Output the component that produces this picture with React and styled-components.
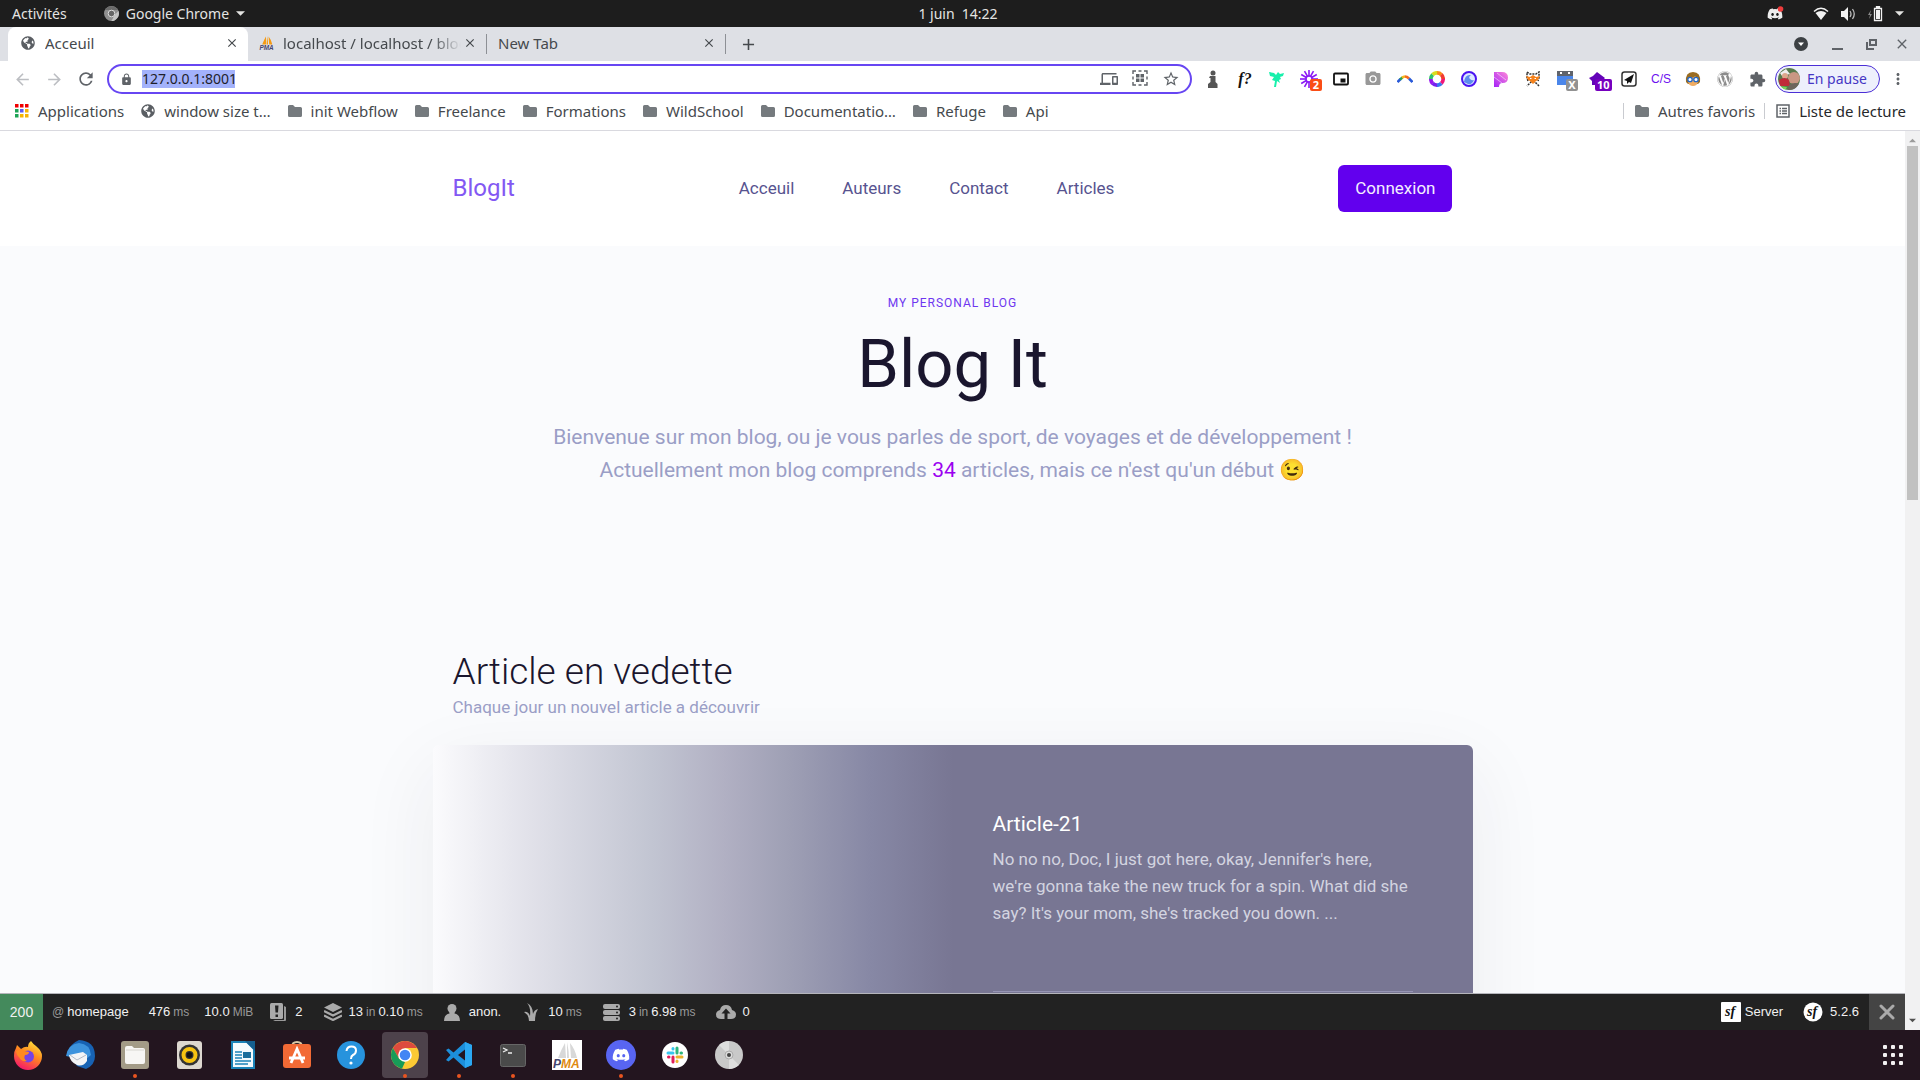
import React from "react";
import styled, { createGlobalStyle, css } from "styled-components";
import { FaDiscord, FaWordpress, FaGlobeAmericas } from "react-icons/fa";
import { MdLock, MdStarBorder, MdRefresh, MdArrowBack, MdArrowForward, MdExtension, MdMoreVert, MdDevices, MdClose, MdAdd, MdPhotoCamera } from "react-icons/md";

const GlobalStyle = createGlobalStyle`
  *, *::before, *::after { box-sizing: border-box; }
  body { margin: 0; background: #fff; }
  h1, h2, h3, p { margin: 0; padding: 0; }
  button, input { font: inherit; color: inherit; border: 0; padding: 0; background: none; }
  button { cursor: pointer; }
  a { color: inherit; text-decoration: none; }
  svg { display: block; flex: none; }
`;

const uiFont = `"Noto Sans", "Open Sans", sans-serif`;
const pageFont = `Roboto, "Liberation Sans", "Noto Color Emoji", sans-serif`;

/* ---------- desktop shell ---------- */

const Desktop = styled.div`
  display: flex;
  flex-direction: column;
  height: 100vh;
  overflow: hidden;
  font: 15px/20px ${uiFont};
`;

const SystemBar = styled.header`
  display: grid;
  grid-template-columns: 1fr auto 1fr;
  align-items: center;
  height: 27px;
  flex: none;
  padding: 0 16px 0 12px;
  background: #1d1d1d;
  color: #e4e4e2;
  font-size: 14px;
`;

const SystemGroup = styled.div`
  display: flex;
  align-items: center;
  gap: ${(p) => p.$gap}px;
  justify-content: ${(p) => (p.$end ? "flex-end" : "flex-start")};
`;

const MenuButton = styled.button`
  display: flex;
  align-items: center;
  gap: 7px;
`;

const Clock = styled.time`
  white-space: pre;
`;

const DiscordTray = styled.span`
  display: flex;
  margin-right: 17px;
`;

/* ---------- browser tabs ---------- */

const TabStrip = styled.div`
  display: flex;
  align-items: stretch;
  height: 34px;
  flex: none;
  padding: 0 10px 0 8px;
  background: #dee0e5;
  color: #45494d;
`;

const Tab = styled.div`
  display: flex;
  align-items: center;
  gap: ${(p) => (p.$active ? 10 : 8)}px;
  width: ${(p) => (p.$active ? 240 : 238)}px;
  padding: 0 9px 2px ${(p) => (p.$active ? 13 : 11)}px;
  border-radius: 8px 8px 0 0;
  background: ${(p) => (p.$active ? "#fff" : "transparent")};
`;

const TabTitle = styled.span`
  flex: 1;
  overflow: hidden;
  white-space: nowrap;
  ${(p) =>
    p.$fade &&
    css`
      margin-right: -6px;
      mask-image: linear-gradient(90deg, #000 84%, transparent);
    `}
`;

const TabDivider = styled.span`
  width: 1px;
  height: 20px;
  align-self: center;
  background: #8d9095;
`;

const IconButton = styled.button`
  display: flex;
  align-items: center;
  justify-content: center;
  width: ${(p) => p.$size || 14}px;
  height: ${(p) => p.$size || 14}px;
  flex: none;
  color: ${(p) => p.$color || "inherit"};
`;

const NewTab = styled(IconButton)`
  align-self: center;
  margin-left: 12px;
`;

const WindowControls = styled.div`
  display: flex;
  align-items: center;
  gap: 16px;
  margin-left: auto;
  color: #5f6368;
`;

/* ---------- address bar ---------- */

const Toolbar = styled.div`
  display: flex;
  align-items: center;
  height: 36px;
  flex: none;
  padding: 0 14px 0 12px;
  background: #fff;
`;

const NavButtons = styled.div`
  display: flex;
  gap: 12px;
  margin-right: 11px;
  color: #5f6368;
`;

const AddressBar = styled.label`
  display: flex;
  align-items: center;
  flex: 1;
  height: 30px;
  padding: 0 10px 0 11px;
  border: 2px solid #6746f2;
  border-radius: 15px;
  color: #5f6368;
`;

const AddressInput = styled.input`
  width: 93px;
  height: 18px;
  margin: 0 auto 0 9px;
  background: #a3b2fb;
  color: #1f1f2b;
  font-size: 14px;
  line-height: 18px;
  outline: none;
`;

const AddressIcons = styled.span`
  display: flex;
  gap: 14px;
`;

const Extensions = styled.div`
  display: flex;
  gap: 14px;
  margin: 0 9px 0 12px;
`;

const ExtensionButton = styled(IconButton)`
  position: relative;
  font: ${(p) => p.$font || `12px/18px ${uiFont}`};
`;

const Badge = styled.span`
  position: absolute;
  top: 9px;
  left: ${(p) => (p.$wide ? 7 : 10)}px;
  min-width: 12px;
  padding: 0 2px;
  border-radius: 2px;
  background: ${(p) => p.$bg};
  color: #fff;
  font: 700 11px/12px ${uiFont};
`;

const Profile = styled.button`
  display: flex;
  align-items: center;
  gap: 6px;
  width: 105px;
  height: 28px;
  padding: 0 3px 0 1px;
  margin-right: 10px;
  border: 1px solid #4b2fd6;
  border-radius: 14px;
  background: #eef0fc;
  color: #4536c4;
  font-size: 14px;
  white-space: nowrap;
`;

/* ---------- bookmarks ---------- */

const BookmarkBar = styled.nav`
  display: flex;
  align-items: center;
  height: 34px;
  flex: none;
  padding: 0 14px 6px 15px;
  border-bottom: 1px solid #d9d9df;
  background: #fff;
  color: #45494d;
`;

const Bookmark = styled.a`
  display: flex;
  align-items: center;
  gap: 9px;
  padding-right: 17px;
  white-space: nowrap;
  color: ${(p) => (p.$dark ? "#26282b" : "inherit")};
  &:last-child { padding-right: 0; }
`;

const BookmarkGroup = styled.div`
  display: flex;
  margin-left: ${(p) => (p.$end ? "auto" : 0)};
`;

const Divider = styled.span`
  width: 1px;
  height: 16px;
  align-self: center;
  margin-right: 11px;
  margin-left: ${(p) => (p.$tight ? -8 : 0)}px;
  background: #c9cbd0;
`;

/* ---------- page ---------- */

const Viewport = styled.div`
  display: flex;
  flex: 1;
  min-height: 0;
`;

const PageColumn = styled.div`
  display: flex;
  flex-direction: column;
  flex: 1;
  min-width: 0;
`;

const Page = styled.div`
  flex: 1;
  min-height: 0;
  overflow: hidden;
  background: #fafbfd;
  font-family: ${pageFont};
`;

const SiteHeader = styled.header`
  padding: 34px 24px;
  background: #fff;
`;

const Container = styled.div`
  width: 100%;
  max-width: 1000px;
  margin: 0 auto;
`;

const HeaderRow = styled(Container)`
  display: flex;
  align-items: center;
  justify-content: space-between;
`;

const Brand = styled.a`
  padding-bottom: 2px;
  color: #8358f3;
  font-size: 24px;
  line-height: 30px;
`;

const SiteNav = styled.nav`
  display: flex;
  gap: 48px;
  color: #57538f;
  font-size: 17px;
  line-height: 27px;
`;

const LoginButton = styled.button`
  height: 47px;
  padding: 0 17px 2px;
  border-radius: 6px;
  background: #6200ee;
  color: #f4efff;
  font-size: 17px;
`;

const Hero = styled.section`
  display: flex;
  flex-direction: column;
  align-items: center;
  padding: 47px 24px 0;
  text-align: center;
`;

const Eyebrow = styled.p`
  color: #6e37f0;
  font-size: 12px;
  line-height: 20px;
  letter-spacing: 1px;
  text-transform: uppercase;
`;

const Title = styled.h1`
  margin: 11px 0 17px;
  color: #1a162e;
  font-size: 67px;
  font-weight: 400;
  line-height: 80px;
`;

const Lead = styled.p`
  color: #9a9ec6;
  font-size: 21px;
  line-height: 33px;
`;

const Count = styled.strong`
  color: #9b00f0;
  font-weight: 400;
`;

const Featured = styled.section`
  padding: 163px 24px 0;
`;

const SectionTitle = styled.h2`
  color: #1a162e;
  font-size: 37px;
  font-weight: 300;
  line-height: 44px;
`;

const SectionText = styled.p`
  margin: 0 0 24px;
  color: #9a9ec6;
  font-size: 17px;
  line-height: 27px;
`;

const Card = styled.article`
  display: grid;
  grid-template-columns: 1fr 1fr;
  min-height: 420px;
  margin: 0 -20px;
  border-radius: 6px;
  background: linear-gradient(90deg, #fbfbfd 0%, #e2e2ea 9%, #c2c5d2 21%, #b1b0c3 28%, #9fa0b5 34%, #8788a5 42%, #787693 50%);
  box-shadow: 0 24px 80px rgba(40, 44, 60, 0.07);
`;

const CardBody = styled.div`
  grid-column: 2;
  padding: 65px 60px 0 40px;
`;

const CardTitle = styled.h3`
  color: #fff;
  font-size: 21px;
  font-weight: 400;
  line-height: 28px;
`;

const CardText = styled.p`
  margin: 8px 0 64px;
  color: #d3d4e0;
  font-size: 17px;
  line-height: 27px;
`;

const Rule = styled.hr`
  margin: 0;
  border: 0;
  border-top: 1px solid #9694b4;
`;

const Scrollbar = styled.div`
  display: flex;
  flex-direction: column;
  align-items: center;
  justify-content: space-between;
  width: 15px;
  padding: 7px 0;
  background: #f1f1f2;
`;

const Thumb = styled.div`
  width: 11px;
  height: 40%;
  margin: 3px 0 auto;
  background: #c1c1c1;
`;

/* ---------- debug toolbar ---------- */

const DebugBar = styled.footer`
  display: flex;
  height: 37px;
  flex: none;
  border-top: 1px solid #b5b5bb;
  background: #222;
  color: #f1f1f1;
  font: 13px/36px "Liberation Sans", Arial, sans-serif;
`;

const Status = styled.a`
  width: 43px;
  background: #448a5c;
  font-size: 14px;
  text-align: center;
`;

const DebugItem = styled.a`
  display: flex;
  align-items: center;
  gap: 3px;
  margin-left: ${(p) => p.$space}px;
  white-space: nowrap;
  svg { margin-right: ${(p) => p.$icon || 4}px; }
`;

const Dim = styled.span`
  color: #999;
  font-size: 12px;
`;

const DebugRight = styled.div`
  display: flex;
  margin-left: auto;
`;

const DebugClose = styled.button`
  display: flex;
  align-items: center;
  justify-content: center;
  width: 36px;
  margin-left: 10px;
  background: #444;
`;

/* ---------- dock ---------- */

const Dock = styled.nav`
  display: flex;
  align-items: center;
  height: 50px;
  flex: none;
  gap: 8px;
  padding: 0 17px 0 4px;
  background: #23151f;
`;

const DockApp = styled.button`
  position: relative;
  display: flex;
  align-items: center;
  justify-content: center;
  width: 46px;
  height: 46px;
  border-radius: 4px;
  background: ${(p) => (p.$active ? "#4d424b" : "transparent")};
  ${(p) =>
    p.$running &&
    css`
      &::after {
        content: "";
        position: absolute;
        bottom: 0;
        width: 4px;
        height: 4px;
        border-radius: 2px;
        background: #e95420;
      }
    `}
`;

const Launcher = styled.button`
  display: grid;
  grid-template-columns: repeat(3, 4px);
  gap: 4px;
  margin-left: auto;
`;

const LauncherDot = styled.span`
  height: 4px;
  border-radius: 1px;
  background: #f2f0f1;
`;

/* ---------- drawings ---------- */

const Svg = ({ w = 16, h = w, vb, children, ...rest }) => (
  <svg width={w} height={h} viewBox={vb || `0 0 ${w} ${h}`} aria-hidden="true" {...rest}>{children}</svg>
);
const Caret = ({ up, w = 9, color = "#e4e4e2" }) => (
  <Svg w={w} h={5} vb="0 0 10 5"><path d={up ? "M0 5h10L5 0z" : "M0 0h10L5 5z"} fill={color} /></Svg>
);
const Folder = () => (
  <Svg w={14} h={12}><path d="M0 1.500Q0 0 1.500 0H5l2 2h5.500Q14 2 14 3.500V10.500Q14 12 12.500 12h-11Q0 12 0 10.500z" fill="#757a7e" /></Svg>
);
const ChromeGrey = () => (
  <Svg w={15}><circle cx="7.500" cy="7.500" r="7.500" fill="#8f8f8f" /><path d="M1 4A7.500 7.500 0 0 1 14 4H7.500z" fill="#6b6b6b" /><path d="M14.500 5A7.500 7.500 0 0 1 7.500 15L10.500 9z" fill="#c4c4c4" /><circle cx="7.500" cy="7.500" r="3.300" fill="#666" stroke="#ddd" /></Svg>
);
const AppsGrid = () => {
  const c = ["#f00000", "#f00000", "#f00000", "#1ca455", "#5b5bf0", "#f6b400", "#1ca455", "#f6b400", "#f6b400"];
  return <Svg w={14}>{c.map((f, i) => <rect key={i} x={(i % 3) * 5} y={Math.floor(i / 3) * 5} width="3.500" height="3.500" fill={f} />)}</Svg>;
};
const PmaIcon = ({ size = 16, box }) => (
  <Svg w={size} vb="0 0 30 30">
    {box && <path d="M0 0h30v30H0z" fill="#fff" />}
    <path d="M13 3Q9 10 6 18h8zM15 2q2 9 2 16h-2zM18 3q5 6 7 15h-6z" fill={box ? "#d8d8d8" : "#f59a13"} />
    <text x="1" y="28" fontFamily="Liberation Sans, sans-serif" fontStyle="italic" fontWeight="700" fontSize="12" fill="#45456f">P<tspan fill={box ? "#e08a10" : "#45456f"}>MA</tspan></text>
  </Svg>
);
const QrIcon = () => (
  <Svg w={16} fill="none" stroke="#5f6368" strokeWidth="1.400"><path d="M1 4V1h3M12 1h3v3M15 12v3h-3M4 15H1v-3M6.500 1h3M6.500 15h3M1 6.500v3M15 6.500v3" /><path d="M4 4h3.500v3.500H4zM8.500 4H12v3.500H8.500zM4 8.500h3.500V12H4zM8.500 8.500H12V12H8.500z" fill="#5f6368" stroke="none" /></Svg>
);
const ReadingList = () => (
  <Svg w={14} fill="none" stroke="#5f6368" strokeWidth="1.500"><path d="M1 1h12v12H1z" /><path d="M3.500 4.500h1.500M6 4.500h5M3.500 7h1.500M6 7h5M3.500 9.500h1.500M6 9.500h5" /></Svg>
);
const Restore = () => (
  <Svg w={11} fill="none" stroke="#5f6368" strokeWidth="2"><path d="M4 1h6v5H4z" /><path d="M1 3v7h7" /></Svg>
);
const TabMenu = () => (
  <Svg w={14}><circle cx="7" cy="7" r="7" fill="#3c4043" /><path d="M4 5.500h6L7 9z" fill="#fff" /></Svg>
);
const Wifi = () => <Svg w={16} h={13}><path d="M0 4Q8-3 16 4L8 13z" fill="#1d1d1d" /><path d="M2.500 6Q8 2 13.500 6L8 13z" fill="#f2f2f2" /><path d="M1 4.500Q8-2 15 4.500" stroke="#f2f2f2" fill="none" strokeWidth="1.500" /></Svg>;
const Speaker = () => <Svg w={15} h={14}><path d="M0 4h3l4-4v14L3 10H0z" fill="#f2f2f2" /><path d="M9 4q2 3 0 6M11.500 2q3.500 5 0 10" fill="none" stroke="#bbb" strokeWidth="1.300" /></Svg>;
const Battery = () => <Svg w={15} h={16}><path d="M3 4 0 9h2l-1 4 3-5H2z" fill="#8b8b8b" /><path d="M6.500 2.500h7v12h-7zM8.500 0.500h3v1.500h-3z" fill="none" stroke="#f2f2f2" strokeWidth="1.300" /><path d="M8 4h4v9H8z" fill="#f2f2f2" /></Svg>;

const Avatar = () => (
  <Svg w={24}><defs><clipPath id="avatar"><circle cx="12" cy="12" r="11" /></clipPath></defs><g clipPath="url(#avatar)"><path d="M0 0h24v24H0z" fill="#587a4c" /><circle cx="17" cy="11" r="6" fill="#c99783" /><path d="M3 6l6-4 4 5-8 2z" fill="#eee" /><circle cx="8" cy="9" r="3" fill="#dda68c" /><path d="M2 13q6-4 10 0l1 6H3z" fill="#c02a39" /><path d="M12 18q6-4 12 0v7H11z" fill="#6d655c" /><path d="M2 19l8 1-2 4z" fill="#78d455" /></g></Svg>
);

const range = (n) => Array.from({ length: n }, (_, i) => i);

const extensions = [
  { label: "Info", art: <Svg w={14} h={18}><circle cx="7" cy="3" r="2.500" fill="#555" /><path d="M4 6h5.500v6l2 2v4H2v-4l2.500-2V8H3z" fill="#555" /></Svg> },
  { label: "WhatFont", font: `italic 700 16px/18px "Liberation Serif", serif`, text: "f?", color: "#111" },
  { label: "Deer", art: <Svg w={16} h={16}><path d="M0 1l5 1 2 2 2-3 2 2 4-1-1 3-3 1 1 2-2 1 1 3-3-2-1 6H5l1-6-3-1 2-3-4-1z" fill="#17f0ac" /></Svg> },
  { label: "Loom", badge: "2", bg: "#fa4d16", art: <Svg w={18}>{range(12).map((i) => <path key={i} d="M9 0v6" stroke="#8a18f5" strokeWidth="1.600" transform={`rotate(${i * 30} 9 9)`} />)}<circle cx="9" cy="9" r="3" fill="none" stroke="#8a18f5" strokeWidth="1.500" /></Svg> },
  { label: "Picture in picture", art: <Svg w={16} h={14}><rect x="1" y="1.500" width="14" height="11" rx="1" fill="#fff" stroke="#111" strokeWidth="1.800" /><path d="M7.500 6.500h5v4h-5z" fill="#111" /></Svg> },
  { label: "Screenshot", art: <MdPhotoCamera size={18} color="#989898" /> },
  { label: "Rainbow", art: <Svg w={16} h={12} fill="none" strokeWidth="2.600"><path d="M0.500 9l3-3" stroke="#2959d8" /><path d="M3 6.500l2.500-2" stroke="#25a05a" /><path d="M5 4.800Q6.500 3.600 8 3.500" stroke="#f5b51a" /><path d="M8 3.500q2 0 4 2" stroke="#f36a1f" /><path d="M12 5.500l3.500 3.500" stroke="#2959d8" /></Svg> },
  { label: "Colour wheel", art: <Svg w={16}>{["#f88a18", "#f33b2f", "#f0167a", "#3a76f0", "#7721ee", "#9916f0", "#31c26a", "#d8dd1d"].map((c, i) => <path key={c} d="M8 8V0A8 8 0 0 1 13.800 2.400z" fill={c} transform={`rotate(${i * 45} 8 8)`} />)}<circle cx="8" cy="8" r="4.300" fill="#fff" /></Svg> },
  { label: "Wave", art: <Svg w={16}><circle cx="8" cy="8" r="7" fill="#dce8ff" stroke="#4a14f2" strokeWidth="2" /><path d="M3 11Q4 3 10 4q-3 2-1 4t4 1q-2 5-6 4z" fill="#5c8bee" /></Svg> },
  { label: "Pesticide", art: <Svg w={14} h={15}><defs><linearGradient id="pink" x1="0" y1="1" x2="1" y2="0"><stop stopColor="#a522f8" /><stop offset="1" stopColor="#ff8ad8" /></linearGradient></defs><path d="M0 0h8q6 0 6 5.500T8.500 11Q5 11 5 15H0z" fill="url(#pink)" /><path d="M0 5l8 6M3 1l9 7" stroke="#fff" strokeWidth=".5" /></Svg> },
  { label: "Fox", art: <Svg w={16}><path d="M2 1l3 2h6l3-2v6l-1 3M14 15l-4-4H6l-4 4M3 10L2 7V1" fill="none" stroke="#333" strokeWidth="1.500" strokeDasharray="2 1" /><path d="M1 5l4 1 3-2 3 2 4-1-2 4-2 1-3 3-3-3-2-1z" fill="#f5811a" /><path d="M5 7h1.500v1H5zM9.500 7H11v1H9.500z" fill="#fff" /></Svg> },
  { label: "Blocks", badge: "X", bg: "#929292", art: <Svg w={16} h={16}><path d="M0 0h16v5H0z" fill="#60646c" /><path d="M0 5h16v9H0z" fill="#4a86ea" /><path d="M3 1h2v2H3zM11 1h2v2h-2z" fill="#fff" /></Svg> },
  { label: "Purple", badge: "10", bg: "#7600be", art: <Svg w={16} h={15}><path d="M8 0l4 3 4 3-3 3v4H3V9L0 6l4-2z" fill="#6304b8" /></Svg> },
  { label: "Send", art: <Svg w={16}><rect x="1" y="1" width="14" height="14" rx="2.500" fill="#fff" stroke="#333" strokeWidth="1.500" /><path d="M13 3 3 9l3 1v3l2-2 2 1z" fill="#111" /></Svg> },
  { label: "CJS", font: `12px/18px "Liberation Sans Narrow", "Liberation Sans", sans-serif`, text: "C/S", color: "#6c10ef" },
  { label: "Face", art: <Svg w={16}><path d="M1 11Q0 1 8 1t7 10l-2 2H3z" fill="#9a6c22" /><path d="M3 7q6 0 7-2 1 2 3 2v4q-1 4-5 4t-5-4z" fill="#f0ac62" /><circle cx="5" cy="8.500" r="2.200" fill="#fff" stroke="#1f67c9" strokeWidth="1.300" /><circle cx="11" cy="8.500" r="2.200" fill="#fff" stroke="#1f67c9" strokeWidth="1.300" /></Svg> },
  { label: "WordPress", art: <FaWordpress size={16} color="#8c8c8c" /> },
  { label: "Extensions", art: <MdExtension size={17} color="#5f6368" /> },
];

const bookmarks = ["init Webflow", "Freelance", "Formations", "WildSchool", "Documentatio…", "Refuge", "Api"];
const siteLinks = ["Acceuil", "Auteurs", "Contact", "Articles"];

/* debug toolbar glyphs */
const Logs = () => <Svg w={16} h={18}><path d="M14 3l2 1v13q0 1-1 1H5l-2-1h11z" fill="#999" /><rect width="13" height="16" rx="1.500" fill="#aaa" /><path d="M5 2.500h3.500L8 9.500H5.500zM5.500 11.500h2.500v2.500H5.500z" fill="#222" /></Svg>;
const Layers = () => <Svg w={18} h={18}><path d="M9 0l9 4.500L9 9 0 4.500z" fill="#aaa" /><path d="M0 8l9 4.500L18 8M0 12.500L9 17l9-4.500" fill="none" stroke="#aaa" strokeWidth="2.200" /></Svg>;
const Person = () => <Svg w={16} h={17}><circle cx="8" cy="4.500" r="4.500" fill="#aaa" /><path d="M5 7h6l-.5 2.500Q16 10.500 16 17H0q0-6.500 5.500-7.500z" fill="#aaa" /></Svg>;
const Twig = () => <Svg w={15} h={18}><path d="M3 0q6 3 6 11 1-4 5-5-3 4-3 12H5Q5 12 0 9q4-1 6 4Q7 4 3 0z" fill="#aaa" /></Svg>;
const Database = () => <Svg w={17} h={17}>{range(3).map((i) => <g key={i}><rect y={i * 6} width="17" height="5" rx="2" fill="#aaa" /><circle cx="14" cy={i * 6 + 2.5} r="1" fill="#222" /></g>)}</Svg>;
const Cloud = () => <Svg w={20} h={14}><path d="M5 14Q0 14 0 9.500 0 6 4 5 5 0 10 0t6 5q4 1 4 4.500Q20 14 15 14z" fill="#aaa" /><path d="M10 3.500l4.500 5h-3V14h-3V8.500h-3z" fill="#222" /></Svg>;
const Sf = ({ round }) => (
  <Svg w={20}>{round ? <circle cx="10" cy="10" r="9.500" fill="#fff" /> : <rect width="20" height="20" rx="1" fill="#fff" />}<text x="4" y="14" fontFamily="Liberation Serif, serif" fontStyle="italic" fontWeight="700" fontSize="14" fill="#111">sf</text></Svg>
);

const Firefox = () => (
  <Svg w={29}><defs><linearGradient id="ff" x1=".8" y1="0" x2=".3" y2="1"><stop stopColor="#ffe83e" /><stop offset=".45" stopColor="#ff8a1f" /><stop offset="1" stopColor="#f5156c" /></linearGradient></defs><path d="M3 7l1-3 4 4q4-3 7-2 0-4 3-6 2 3 5 5 6 5 6 10a14 14 0 0 1-28 0Q1 10 3 7z" fill="url(#ff)" /><circle cx="15" cy="15.500" r="6" fill="#7543e5" /><path d="M3 10q5-3 8 0l5 1q0 3-4 3-2 4 2 6-6 1-8-4-2-1-3-6z" fill="#ff8a1f" /></Svg>
);
const Thunderbird = () => (
  <Svg w={30}><path d="M13 0q16 1 16 16 0 9-9 13l-9-3L2 12Q5 3 13 0z" fill="#1762b3" /><path d="M0 16Q2 4 13 3q11 1 12 12l-6 5z" fill="#3d93dd" /><path d="M3 15l14-3 4 3 0 6q-4 6-10 4-7-3-8-10z" fill="#f3f4f6" /><path d="M4 15l7 5 9-5" fill="none" stroke="#b4bbc6" /></Svg>
);
const Files = () => <Svg w={28}><rect width="28" height="28" rx="3" fill="#a39b87" /><path d="M4 7q0-2 2-2h5l2 2h9q2 0 2 2v12q0 2-2 2H6q-2 0-2-2z" fill="#f7f6f4" /><path d="M5 9h18" stroke="#d8d5cf" /></Svg>;
const Rhythm = () => <Svg w={25} h={28}><rect width="25" height="28" rx="3" fill="#ddd8d0" /><circle cx="12.500" cy="14" r="10.500" fill="#333" /><circle cx="12.500" cy="14" r="6" fill="#333" stroke="#f5c211" strokeWidth="4" /><circle cx="12.500" cy="14" r="2.800" fill="#111" /></Svg>;
const Writer = () => <Svg w={24} h={28}><path d="M1 1h15l7 7v19H1z" fill="#f4fafd" stroke="#1b83b8" strokeWidth="2" /><path d="M14 0h10v10z" fill="#155f8f" /><path d="M4 11h7M4 14h7M4 17h7M4 20h16M4 23h13" stroke="#1b83b8" strokeWidth="1.500" /><path d="M12 11h8v6h-8z" fill="#1b6e9c" /></Svg>;
const Software = () => <Svg w={28} h={28}><path d="M9 6Q9 1 14 1t5 5" fill="none" stroke="#d9c9a5" strokeWidth="2" /><rect y="3" width="28" height="24" rx="3" fill="#f26a35" /><path d="M8 22l6-14 6 14M6 17h16" fill="none" stroke="#fff" strokeWidth="2.800" /></Svg>;
const Help = () => <Svg w={28}><circle cx="14" cy="14" r="14" fill="#2793dd" /><path d="M9.500 10q.5-4.500 5-4.500t4.500 4q0 3-3 4.500-2 1-2 4" fill="none" stroke="#fff" strokeWidth="2" /><circle cx="14" cy="22" r="1.600" fill="#fff" /></Svg>;
const Chrome = () => <Svg w={28}><circle cx="14" cy="14" r="14" fill="#fcc934" /><path d="M1.900 7A14 14 0 0 1 26.100 7H14L8 17.500z" fill="#dd4b3e" /><path d="M1.900 7 8 17.500l6 3.500-3 6.700A14 14 0 0 1 1.900 7z" fill="#179b58" /><circle cx="14" cy="14" r="6.800" fill="#fff" /><circle cx="14" cy="14" r="5.300" fill="#4285f4" /></Svg>;
const Code = () => <Svg w={26}><path d="M19 0l7 3v20l-7 3L7.500 15.500 2.500 19.500 0 18l4.500-5L0 8l2.500-1.500 5 4zM19 7.500L12 13l7 5.500z" fill="#1c8fdb" fillRule="evenodd" /><path d="M19 0l7 3v20l-7 3z" fill="#2ba8f2" /></Svg>;
const Terminal = () => <Svg w={26} h={23}><rect x=".5" y=".5" width="25" height="22" rx="2" fill="#4a4a4a" stroke="#666" /><path d="M3 4l4 2-4 2M8 9h4" stroke="#eee" fill="none" strokeWidth="1.300" /></Svg>;
const DiscordApp = () => <Svg w={30}><circle cx="15" cy="15" r="15" fill="#5865f2" /><FaDiscord x={6} y={6} size={18} color="#fff" /></Svg>;
const Slack = () => (
  <Svg w={26}><circle cx="13" cy="13" r="13" fill="#fff" />
    {["#36c5f0", "#2eb67d", "#ecb22e", "#e01e5a"].map((c, i) => <g key={c} transform={`rotate(${i * 90} 13 13)`} stroke={c} fill={c} strokeWidth="3" strokeLinecap="round"><path d="M6 11h5" /><path d="M11 6.500v.5" /></g>)}
  </Svg>
);
const Disc = () => <Svg w={28}><circle cx="14" cy="14" r="14" fill="#c9c9c9" /><path d="M14 14 4 4Q9 0 14 0zM14 14l10 10q-5 4-10 4z" fill="#dedede" /><circle cx="14" cy="14" r="4" fill="#ddd" stroke="#aaa" /><circle cx="14" cy="14" r="2" fill="#444" /></Svg>;
const PmaApp = () => <PmaIcon size={30} box />;

const dockApps = [
  ["Firefox", Firefox], ["Thunderbird", Thunderbird], ["Fichiers", Files, true], ["Rhythmbox", Rhythm], ["Writer", Writer],
  ["Logiciels", Software], ["Aide", Help], ["Google Chrome", Chrome, true, true], ["Code", Code, true], ["Terminal", Terminal, true],
  ["phpMyAdmin", PmaApp], ["Discord", DiscordApp, true], ["Slack", Slack], ["Disque", Disc],
];

export default function App() {
  return (
    <Desktop>
      <GlobalStyle />
      <SystemBar>
        <SystemGroup $gap={37}>
          <MenuButton>Activités</MenuButton>
          <MenuButton><ChromeGrey />Google Chrome<Caret /></MenuButton>
        </SystemGroup>
        <Clock>{"1 juin  14:22"}</Clock>
        <SystemGroup $end $gap={12}>
          <DiscordTray><Svg w={17} h={16}><FaDiscord size={16} color="#eee" /><circle cx="13.500" cy="3" r="2.800" fill="#ee3c3c" /></Svg></DiscordTray>
          <Wifi /><Speaker /><Battery /><Caret />
        </SystemGroup>
      </SystemBar>

      <TabStrip>
        <Tab $active><FaGlobeAmericas size={14} color="#5a5e63" /><TabTitle>Acceuil</TabTitle><IconButton aria-label="Fermer"><MdClose size={14} /></IconButton></Tab>
        <Tab><PmaIcon /><TabTitle $fade>localhost / localhost / blog</TabTitle><IconButton aria-label="Fermer"><MdClose size={14} /></IconButton></Tab>
        <TabDivider />
        <Tab><TabTitle>New Tab</TabTitle><IconButton aria-label="Fermer"><MdClose size={14} /></IconButton></Tab>
        <TabDivider />
        <NewTab $size={20} aria-label="Nouvel onglet"><MdAdd size={19} /></NewTab>
        <WindowControls>
          <IconButton $size={18} aria-label="Onglets"><TabMenu /></IconButton>
          <IconButton $size={22} aria-label="Réduire"><Svg w={11} h={12}><path d="M0 10h11v2H0z" fill="#5f6368" /></Svg></IconButton>
          <IconButton $size={14} aria-label="Restaurer"><Restore /></IconButton>
          <IconButton $size={16} aria-label="Fermer"><MdClose size={16} /></IconButton>
        </WindowControls>
      </TabStrip>

      <Toolbar>
        <NavButtons>
          <IconButton $size={20} $color="#bcbec2" aria-label="Précédent"><MdArrowBack size={19} /></IconButton>
          <IconButton $size={20} $color="#bcbec2" aria-label="Suivant"><MdArrowForward size={19} /></IconButton>
          <IconButton $size={20} aria-label="Actualiser"><MdRefresh size={20} /></IconButton>
        </NavButtons>
        <AddressBar>
          <MdLock size={13} />
          <AddressInput aria-label="Adresse" defaultValue="127.0.0.1:8001" />
          <AddressIcons><MdDevices size={18} /><QrIcon /><MdStarBorder size={18} /></AddressIcons>
        </AddressBar>
        <Extensions>
          {extensions.map((e) => (
            <ExtensionButton key={e.label} $size={18} $font={e.font} $color={e.color} aria-label={e.label}>
              {e.art || e.text}
              {e.badge && <Badge $bg={e.bg} $wide={e.badge.length > 1}>{e.badge}</Badge>}
            </ExtensionButton>
          ))}
        </Extensions>
        <Profile><Avatar />En pause</Profile>
        <IconButton $size={16} $color="#5f6368" aria-label="Menu"><MdMoreVert size={18} /></IconButton>
      </Toolbar>

      <BookmarkBar>
        <BookmarkGroup>
          <Bookmark href="#"><AppsGrid />Applications</Bookmark>
          <Bookmark href="#"><FaGlobeAmericas size={14} color="#5a5e63" />window size t…</Bookmark>
          {bookmarks.map((b) => <Bookmark key={b} href="#"><Folder />{b}</Bookmark>)}
        </BookmarkGroup>
        <BookmarkGroup $end>
          <Divider />
          <Bookmark href="#"><Folder />Autres favoris</Bookmark>
          <Divider $tight />
          <Bookmark href="#" $dark><ReadingList />Liste de lecture</Bookmark>
        </BookmarkGroup>
      </BookmarkBar>

      <Viewport>
        <PageColumn>
          <Page>
            <SiteHeader>
              <HeaderRow>
                <Brand href="#">BlogIt</Brand>
                <SiteNav>{siteLinks.map((l) => <a key={l} href="#">{l}</a>)}</SiteNav>
                <LoginButton>Connexion</LoginButton>
              </HeaderRow>
            </SiteHeader>
            <Hero>
              <Eyebrow>My personal blog</Eyebrow>
              <Title>Blog It</Title>
              <Lead>
                Bienvenue sur mon blog, ou je vous parles de sport, de voyages et de développement !<br />
                Actuellement mon blog comprends <Count>34</Count> articles, mais ce n'est qu'un début 😉
              </Lead>
            </Hero>
            <Featured>
              <Container>
                <SectionTitle>Article en vedette</SectionTitle>
                <SectionText>Chaque jour un nouvel article a découvrir</SectionText>
                <Card>
                  <CardBody>
                    <CardTitle>Article-21</CardTitle>
                    <CardText>No no no, Doc, I just got here, okay, Jennifer's here, we're gonna take the new truck for a spin. What did she say? It's your mom, she's tracked you down. ...</CardText>
                    <Rule />
                  </CardBody>
                </Card>
              </Container>
            </Featured>
          </Page>
          <DebugBar>
            <Status href="#">200</Status>
            <DebugItem href="#" $space={9}><Dim>@</Dim>homepage</DebugItem>
            <DebugItem href="#" $space={20}>476 <Dim>ms</Dim></DebugItem>
            <DebugItem href="#" $space={15}>10.0 <Dim>MiB</Dim></DebugItem>
            <DebugItem href="#" $space={17} $icon={6}><Logs />2</DebugItem>
            <DebugItem href="#" $space={21}><Layers />13 <Dim>in</Dim> 0.10 <Dim>ms</Dim></DebugItem>
            <DebugItem href="#" $space={21} $icon={6}><Person />anon.</DebugItem>
            <DebugItem href="#" $space={23} $icon={6}><Twig />10 <Dim>ms</Dim></DebugItem>
            <DebugItem href="#" $space={21} $icon={6}><Database />3 <Dim>in</Dim> 6.98 <Dim>ms</Dim></DebugItem>
            <DebugItem href="#" $space={20}><Cloud />0</DebugItem>
            <DebugRight>
              <DebugItem href="#" $space={0} $icon={1}><Sf />Server</DebugItem>
              <DebugItem href="#" $space={20}><Sf round />5.2.6</DebugItem>
              <DebugClose aria-label="Fermer la barre"><Svg w={16} stroke="#aaa" strokeWidth="3" strokeLinecap="round"><path d="M2 2l12 12M14 2L2 14" /></Svg></DebugClose>
            </DebugRight>
          </DebugBar>
        </PageColumn>
        <Scrollbar><Caret up w={7} color="#9b9b9b" /><Thumb /><Caret w={7} color="#505050" /></Scrollbar>
      </Viewport>

      <Dock>
        {dockApps.map(([name, Art, running, active]) => (
          <DockApp key={name} aria-label={name} $running={running} $active={active}><Art /></DockApp>
        ))}
        <Launcher aria-label="Applications">{range(9).map((i) => <LauncherDot key={i} />)}</Launcher>
      </Dock>
    </Desktop>
  );
}
